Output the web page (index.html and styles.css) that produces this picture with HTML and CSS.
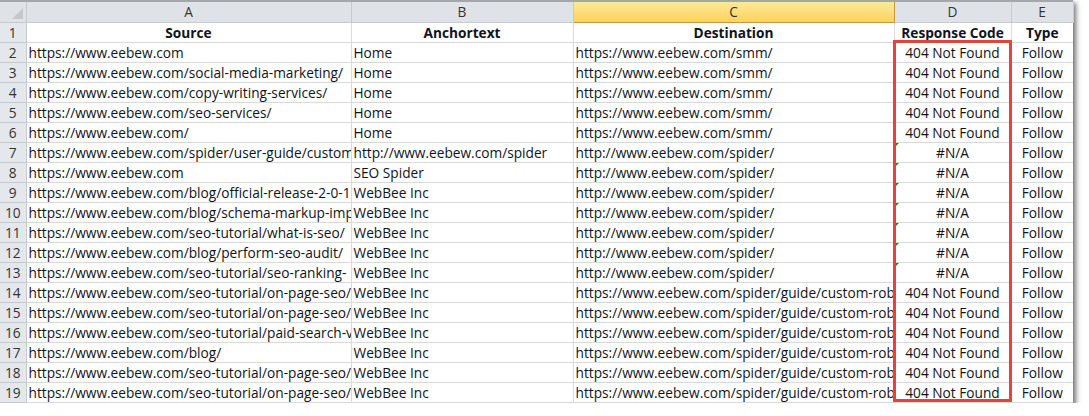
FILE: index.html
```html
<!DOCTYPE html>
<html>
<head>
<meta charset="utf-8">
<link rel="stylesheet" href="styles.css">
</head>
<body>
<div class="sheet">
  <table class="grid">
    <colgroup>
      <col class="c-rn"><col class="c-a"><col class="c-b"><col class="c-c"><col class="c-d"><col class="c-e">
    </colgroup>
    <thead>
      <tr class="colhead">
        <th class="corner"><span class="tri"></span></th>
        <th>A</th><th>B</th><th class="sel">C</th><th>D</th><th>E</th>
      </tr>
    </thead>
    <tbody>
      <tr class="titles"><th class="rn">1</th><td class="b ctr">Source</td><td class="b ctr">Anchortext</td><td class="b ctr">Destination</td><td class="b ctr">Response Code</td><td class="b ctr">Type</td></tr>
      <tr><th class="rn">2</th><td>https://www.eebew.com</td><td>Home</td><td>https://www.eebew.com/smm/</td><td class="ctr">404 Not Found</td><td class="ctr">Follow</td></tr>
      <tr><th class="rn">3</th><td>https://www.eebew.com/social-media-marketing/</td><td>Home</td><td>https://www.eebew.com/smm/</td><td class="ctr">404 Not Found</td><td class="ctr">Follow</td></tr>
      <tr><th class="rn">4</th><td>https://www.eebew.com/copy-writing-services/</td><td>Home</td><td>https://www.eebew.com/smm/</td><td class="ctr">404 Not Found</td><td class="ctr">Follow</td></tr>
      <tr><th class="rn">5</th><td>https://www.eebew.com/seo-services/</td><td>Home</td><td>https://www.eebew.com/smm/</td><td class="ctr">404 Not Found</td><td class="ctr">Follow</td></tr>
      <tr><th class="rn">6</th><td>https://www.eebew.com/</td><td>Home</td><td>https://www.eebew.com/smm/</td><td class="ctr">404 Not Found</td><td class="ctr">Follow</td></tr>
      <tr><th class="rn">7</th><td>https://www.eebew.com/spider/user-guide/custom</td><td>http://www.eebew.com/spider</td><td>http://www.eebew.com/spider/</td><td class="ctr err">#N/A</td><td class="ctr">Follow</td></tr>
      <tr><th class="rn">8</th><td>https://www.eebew.com</td><td>SEO Spider</td><td>http://www.eebew.com/spider/</td><td class="ctr err">#N/A</td><td class="ctr">Follow</td></tr>
      <tr><th class="rn">9</th><td>https://www.eebew.com/blog/official-release-2-0-1</td><td>WebBee Inc</td><td>http://www.eebew.com/spider/</td><td class="ctr err">#N/A</td><td class="ctr">Follow</td></tr>
      <tr><th class="rn">10</th><td>https://www.eebew.com/blog/schema-markup-imp</td><td>WebBee Inc</td><td>http://www.eebew.com/spider/</td><td class="ctr err">#N/A</td><td class="ctr">Follow</td></tr>
      <tr><th class="rn">11</th><td>https://www.eebew.com/seo-tutorial/what-is-seo/</td><td>WebBee Inc</td><td>http://www.eebew.com/spider/</td><td class="ctr err">#N/A</td><td class="ctr">Follow</td></tr>
      <tr><th class="rn">12</th><td>https://www.eebew.com/blog/perform-seo-audit/</td><td>WebBee Inc</td><td>http://www.eebew.com/spider/</td><td class="ctr err">#N/A</td><td class="ctr">Follow</td></tr>
      <tr><th class="rn">13</th><td>https://www.eebew.com/seo-tutorial/seo-ranking-</td><td>WebBee Inc</td><td>http://www.eebew.com/spider/</td><td class="ctr err">#N/A</td><td class="ctr">Follow</td></tr>
      <tr><th class="rn">14</th><td>https://www.eebew.com/seo-tutorial/on-page-seo/</td><td>WebBee Inc</td><td>https://www.eebew.com/spider/guide/custom-rob</td><td class="ctr">404 Not Found</td><td class="ctr">Follow</td></tr>
      <tr><th class="rn">15</th><td>https://www.eebew.com/seo-tutorial/on-page-seo/</td><td>WebBee Inc</td><td>https://www.eebew.com/spider/guide/custom-rob</td><td class="ctr">404 Not Found</td><td class="ctr">Follow</td></tr>
      <tr><th class="rn">16</th><td>https://www.eebew.com/seo-tutorial/paid-search-v</td><td>WebBee Inc</td><td>https://www.eebew.com/spider/guide/custom-rob</td><td class="ctr">404 Not Found</td><td class="ctr">Follow</td></tr>
      <tr><th class="rn">17</th><td>https://www.eebew.com/blog/</td><td>WebBee Inc</td><td>https://www.eebew.com/spider/guide/custom-rob</td><td class="ctr">404 Not Found</td><td class="ctr">Follow</td></tr>
      <tr><th class="rn">18</th><td>https://www.eebew.com/seo-tutorial/on-page-seo/</td><td>WebBee Inc</td><td>https://www.eebew.com/spider/guide/custom-rob</td><td class="ctr">404 Not Found</td><td class="ctr">Follow</td></tr>
      <tr><th class="rn">19</th><td>https://www.eebew.com/seo-tutorial/on-page-seo/</td><td>WebBee Inc</td><td>https://www.eebew.com/spider/guide/custom-rob</td><td class="ctr">404 Not Found</td><td class="ctr">Follow</td></tr>
    </tbody>
  </table>
  <div class="highlight"></div>
</div>
</body>
</html>
```
FILE: styles.css
```css
html, body {
  margin: 0;
  padding: 0;
  background: #ffffff;
}
body {
  font-family: "Open Sans", "Liberation Sans", sans-serif;
  font-size: 13.7px;
  color: #10131a;
}
.sheet {
  position: relative;
  width: 1073px;
  box-shadow: 3px 3px 5px rgba(0, 0, 0, 0.55);
  border-top: 2px solid #a3a7ac;
}
.grid {
  border-collapse: collapse;
  table-layout: fixed;
  width: 1073px;
}
.c-rn { width: 26px; }
.c-a { width: 325px; }
.c-b { width: 222px; }
.c-c { width: 321px; }
.c-d { width: 117px; }
.c-e { width: 62px; }
.grid th, .grid td {
  height: 19px;
  padding: 0 2px;
  border: 1px solid #d9d9d9;
  white-space: nowrap;
  overflow: hidden;
  text-overflow: clip;
  line-height: 19px;
  box-sizing: border-box;
}
.grid tr:first-child th, .grid tr:first-child td { border-top: 0; }
.grid td:last-child { border-right: 0; }
.colhead th {
  background: #dfe3e8;
  border: 1px solid #c5cacf;
  border-top: 0;
  font-weight: normal;
  color: #333;
  text-align: center;
  height: 20px;
}
.colhead th.sel {
  background: linear-gradient(#fde89a, #fcd35a);
  border-left-color: #c8963c;
  border-right-color: #c8963c;
  border-bottom-color: #c8963c;
}
.colhead th.corner { position: relative; border-left: 0; }
.tri {
  position: absolute;
  right: 3px;
  bottom: 3px;
  width: 0;
  height: 0;
  border-left: 11px solid transparent;
  border-bottom: 11px solid #c4c8cd;
}
.rn {
  background: #e4e7eb;
  border: 1px solid #c5cacf !important;
  border-left: 0 !important;
  font-weight: normal;
  color: #333;
  text-align: center;
  padding: 0 !important;
}
.b { font-weight: bold; }
.ctr { text-align: center; }
.err { position: relative; }
.err::before {
  content: "";
  position: absolute;
  left: 0;
  top: 0;
  width: 0;
  height: 0;
  border-top: 4px solid #1f8a1f;
  border-right: 4px solid transparent;
}
.highlight {
  position: absolute;
  left: 893px;
  top: 38px;
  width: 119px;
  height: 362px;
  border: 3px solid #e2443f;
  box-sizing: border-box;
  pointer-events: none;
}
```
